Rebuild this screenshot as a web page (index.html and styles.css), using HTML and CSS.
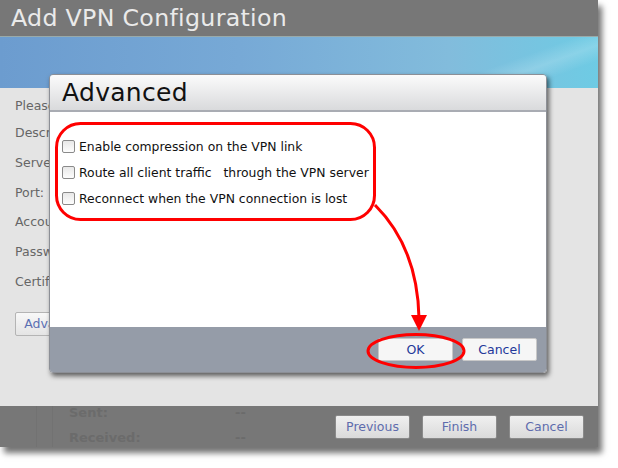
FILE: index.html
```html
<!DOCTYPE html>
<html>
<head>
<meta charset="utf-8">
<link rel="stylesheet" href="styles.css">
</head>
<body>
<div class="page">
  <div class="window">
    <div class="titlebar">Add VPN Configuration</div>
    <div class="banner"></div>
    <div class="content">
      <div class="field first">Please enter the VPN settings</div>
      <div class="field">Description:</div>
      <div class="field">Server:</div>
      <div class="field">Port:</div>
      <div class="field">Account:</div>
      <div class="field">Password:</div>
      <div class="field">Certificate:</div>
      <button class="btn adv">Advanced</button>
    </div>
    <div class="footer">
      <div class="stats">
        <div class="stats-col">
          <div class="stat"><span class="k">Sent:</span><span class="v">--</span></div>
          <div class="stat"><span class="k">Received:</span><span class="v">--</span></div>
        </div>
      </div>
      <div class="actions">
        <button class="btn wiz">Previous</button>
        <button class="btn wiz">Finish</button>
        <button class="btn wiz">Cancel</button>
      </div>
    </div>
  </div>

  <div class="dialog">
    <div class="dlg-title">Advanced</div>
    <div class="dlg-body">
      <label class="opt"><span class="cb"></span>Enable compression on the VPN link</label>
      <label class="opt"><span class="cb"></span>Route all client traffic &nbsp; through the VPN server</label>
      <label class="opt"><span class="cb"></span>Reconnect when the VPN connection is lost</label>
    </div>
    <div class="dlg-foot">
      <button class="btn dlg">OK</button>
      <button class="btn dlg">Cancel</button>
    </div>
  </div>

  <svg class="annot" width="618" height="468" viewBox="0 0 618 468">
    <rect x="56.5" y="123.5" width="318" height="96" rx="24" ry="24" fill="none" stroke="#f00" stroke-width="3"/>
    <path d="M375 205 C 402 232, 418 268, 419 318" fill="none" stroke="#f00" stroke-width="3"/>
    <polygon points="411,315 427,315 419,331" fill="#f00"/>
    <ellipse cx="416" cy="351" rx="48" ry="16.5" fill="none" stroke="#f00" stroke-width="3"/>
  </svg>
</div>
</body>
</html>
```

FILE: styles.css
```css
html, body {
  margin: 0;
  padding: 0;
  background: #fff;
}
.page {
  position: relative;
  width: 618px;
  height: 468px;
  overflow: hidden;
  font-family: "DejaVu Sans", Tahoma, sans-serif;
}
.window {
  width: 598px;
  height: 447px;
  display: flex;
  flex-direction: column;
  box-shadow: 4px 6px 6px rgba(0,0,0,0.55);
  background: #e4e4e4;
}
.titlebar {
  height: 36px;
  background: #777;
  color: #eaeaea;
  font-family: "DejaVu Sans", sans-serif;
  font-size: 23.7px;
  letter-spacing: 0.3px;
  padding-left: 11px;
  line-height: 36px;
  border-bottom: 1px solid #9aa;
}
.banner {
  height: 51px;
  background:
    linear-gradient(160deg, rgba(255,255,255,0) 78%, rgba(255,255,255,0.18) 84%, rgba(255,255,255,0) 90%),
    linear-gradient(90deg, #6c9ccf 0%, #77a9d6 40%, #82bcdc 75%, #6ecbe4 100%);
}
.content {
  flex: 1;
  padding: 6px 0 0 15px;
  color: #666;
  font-size: 12.5px;
}
.field {
  height: 29.8px;
  line-height: 29.8px;
  white-space: nowrap;
}
.field.first {
  height: 24px;
  line-height: 24px;
}
.btn {
  font-family: "DejaVu Sans", Tahoma, sans-serif;
  font-size: 12.5px;
  border: 1px solid #b4b4b4;
  border-radius: 2px;
  background: linear-gradient(#f8f8f8, #e4e4e4);
  padding: 0;
  margin: 0;
}
.adv {
  margin-top: 15px;
  height: 24px;
  width: 80px;
  color: #5b6fb3;
}
.footer {
  height: 41px;
  background: #777;
  display: flex;
  justify-content: space-between;
  align-items: center;
}
.stats {
  align-self: stretch;
  margin-left: 36px;
  padding-left: 15px;
  border-left: 1px solid #727272;
  display: flex;
}
.stats-col {
  border-left: 1px solid #727272;
  padding: 0 0 0 16px;
  display: flex;
  flex-direction: column;
  justify-content: space-between;
  font-weight: bold;
  font-size: 13px;
  color: #6b6b6b;
}
.stat {
  display: flex;
  height: 20px;
  line-height: 20px;
}
.stat:first-child {
  margin-top: -3px;
}
.stat:last-child {
  margin-bottom: -1px;
}
.stat .k {
  width: 166px;
}
.actions {
  display: flex;
  gap: 12px;
  padding-right: 14px;
}
.wiz {
  width: 75px;
  height: 24px;
  color: #5e6cad;
  background: linear-gradient(#f0f0f0, #dadada);
  border-color: #8a8a8a;
}
.dialog {
  position: absolute;
  left: 49px;
  top: 74px;
  width: 498px;
  height: 299px;
  border-radius: 4px;
  overflow: hidden;
  display: flex;
  flex-direction: column;
  box-shadow: 2px 3px 5px rgba(0,0,0,0.6);
  border: 1px solid #8c8f96;
  box-sizing: border-box;
}
.dlg-title {
  height: 35px;
  background: linear-gradient(#fbfbfb, #d9dadc);
  border-bottom: 2px solid #a9acb3;
  color: #111;
  font-size: 25px;
  line-height: 36px;
  padding-left: 12px;
  letter-spacing: 0.3px;
}
.dlg-body {
  flex: 1;
  background: #fff;
  padding: 25px 0 0 12px;
  display: flex;
  flex-direction: column;
  gap: 8px;
}
.opt {
  display: flex;
  align-items: center;
  height: 18px;
  font-size: 12.4px;
  color: #111;
  white-space: pre;
}
.cb {
  width: 11px;
  height: 11px;
  border: 1px solid #8a8a8a;
  border-radius: 2px;
  background: linear-gradient(#e8e8e8, #fdfdfd);
  margin-right: 4px;
  flex: none;
}
.dlg-foot {
  height: 45px;
  background: #959ca8;
  display: flex;
  justify-content: flex-end;
  align-items: center;
  gap: 9px;
  padding-right: 9px;
}
.dlg {
  width: 75px;
  height: 23px;
  color: #23389a;
  background: #f6f6f6;
  border-color: #c8c8c8;
}
.annot {
  position: absolute;
  left: 0;
  top: 0;
}
```
